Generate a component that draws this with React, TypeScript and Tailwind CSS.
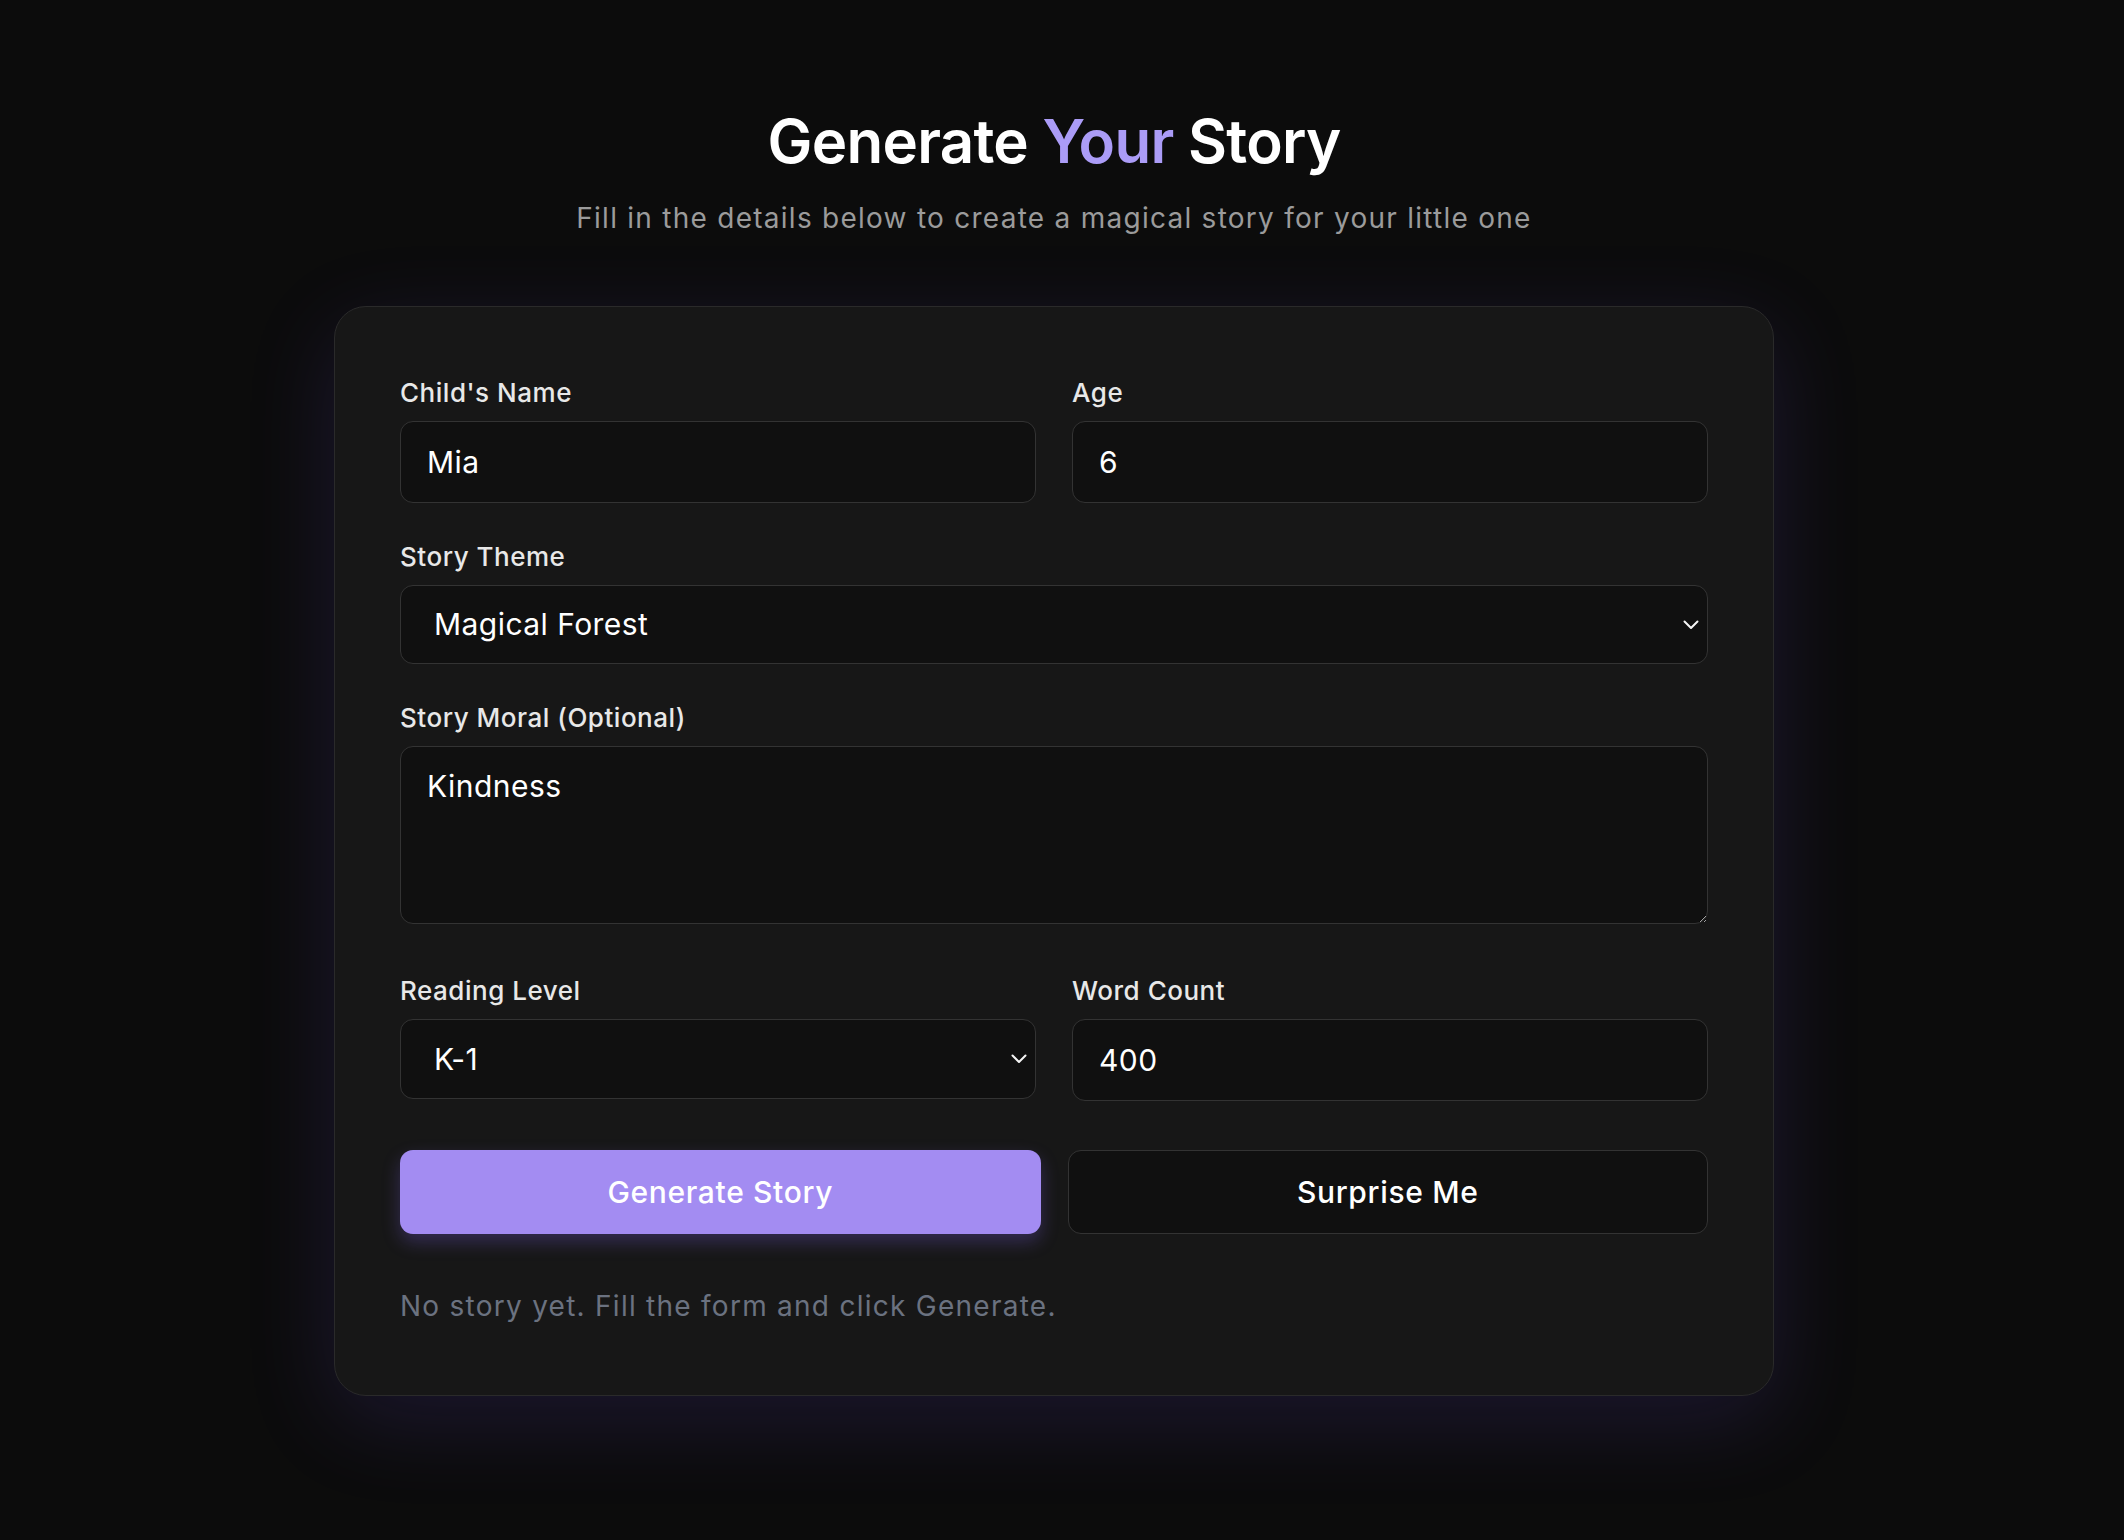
import { useState } from 'react';

function Chevron() {
    return (
        <svg width="16" height="10" viewBox="0 0 16 10" fill="none" className="pointer-events-none absolute right-[9px] top-1/2 -translate-y-1/2">
            <path d="M1.5 1.5L8 8L14.5 1.5" stroke="#f5f5f5" strokeWidth="2" strokeLinecap="round" strokeLinejoin="round" />
        </svg>
    );
}

function Label({ children }: { children: React.ReactNode }) {
    return <label className="mb-[9px] block text-[26px] font-medium leading-[39px] tracking-[0.02em] text-[#e8e8e8]">{children}</label>;
}

const fieldBase =
    'w-full rounded-[13px] border border-[#333333] bg-[#101010] text-[30px] leading-[45px] tracking-[0.015em] text-white outline-none';

export default function App() {
    const [name, setName] = useState('Mia');
    const [age, setAge] = useState('6');
    const [theme, setTheme] = useState('Magical Forest');
    const [moral, setMoral] = useState('Kindness');
    const [level, setLevel] = useState('K-1');
    const [words, setWords] = useState('400');

    return (
        <div className="min-h-screen bg-[#0c0c0c] pr-[16px] font-['Inter','Noto_Sans',sans-serif]">
            <div className="flex flex-col items-center pt-[108px] pb-[140px]">
                <h1 className="text-[60px] font-semibold leading-[66px] tracking-[-0.012em] text-white">
                    Generate <span className="text-[#ab9cf7]">Your</span> Story
                </h1>
                <p className="mt-[24px] text-[28px] leading-[40px] tracking-[0.045em] text-[#9b9b9b]">
                    Fill in the details below to create a magical story for your little one
                </p>

                <div className="mt-[68px] w-[1440px] rounded-[32px] border border-[#2a2a2a] bg-[#171717] px-[65px] pt-[66px] pb-[68px] shadow-[0_24px_90px_rgba(110,80,230,0.16)]">
                    <div className="grid grid-cols-2 gap-x-[36px]">
                        <div>
                            <Label>Child's Name</Label>
                            <input value={name} onChange={(e) => setName(e.target.value)} className={`${fieldBase} h-[82px] px-[26px]`} />
                        </div>
                        <div>
                            <Label>Age</Label>
                            <input value={age} onChange={(e) => setAge(e.target.value)} className={`${fieldBase} h-[82px] px-[26px]`} />
                        </div>
                    </div>

                    <div className="mt-[34px]">
                        <Label>Story Theme</Label>
                        <div className="relative">
                            <select value={theme} onChange={(e) => setTheme(e.target.value)} className={`${fieldBase} h-[79px] appearance-none pl-[33px] pr-[40px]`}>
                                <option>Magical Forest</option>
                                <option>Space Adventure</option>
                                <option>Under the Sea</option>
                                <option>Dinosaur World</option>
                            </select>
                            <Chevron />
                        </div>
                    </div>

                    <div className="mt-[34px]">
                        <Label>Story Moral (Optional)</Label>
                        <textarea value={moral} onChange={(e) => setMoral(e.target.value)} className={`${fieldBase} block h-[178px] px-[26px] pt-[17px]`} />
                    </div>

                    <div className="mt-[47px] grid grid-cols-2 items-start gap-x-[36px]">
                        <div>
                            <Label>Reading Level</Label>
                            <div className="relative">
                                <select value={level} onChange={(e) => setLevel(e.target.value)} className={`${fieldBase} h-[80px] appearance-none pl-[33px] pr-[40px]`}>
                                    <option>Pre-K</option>
                                    <option>K-1</option>
                                    <option>2-3</option>
                                    <option>4-5</option>
                                </select>
                                <Chevron />
                            </div>
                        </div>
                        <div>
                            <Label>Word Count</Label>
                            <input value={words} onChange={(e) => setWords(e.target.value)} className={`${fieldBase} h-[82px] px-[26px]`} />
                        </div>
                    </div>

                    <div className="mt-[49px] grid grid-cols-2 gap-x-[27px]">
                        <button className="h-[84px] rounded-[13px] bg-[#a38cf2] text-[30px] font-medium tracking-[0.022em] text-white shadow-[0_8px_18px_rgba(130,100,240,0.28)]">
                            Generate Story
                        </button>
                        <button className="h-[84px] rounded-[13px] border border-[#333333] bg-[#101010] text-[30px] font-medium tracking-[0.022em] text-white">
                            Surprise Me
                        </button>
                    </div>

                    <p className="mt-[51px] text-[28px] leading-[42px] tracking-[0.045em] text-[#6b7280]">
                        No story yet. Fill the form and click Generate.
                    </p>
                </div>
            </div>
        </div>
    );
}
